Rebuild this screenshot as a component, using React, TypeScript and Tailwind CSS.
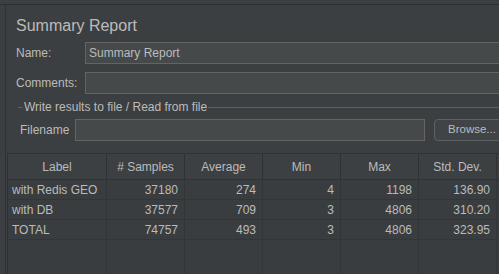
import React from "react";

const rows = [
  ["with Redis GEO", "37180", "274", "4", "1198", "136.90"],
  ["with DB", "37577", "709", "3", "4806", "310.20"],
  ["TOTAL", "74757", "493", "3", "4806", "323.95"],
];
const headers = ["Label", "# Samples", "Average", "Min", "Max", "Std. Dev."];
const widths = ["w-[99px]", "w-[78px]", "w-[78px]", "w-[78px]", "w-[78px]", "w-[78px]"];

export default function App() {
  return (
    <div
      className="w-[499px] h-[274px] overflow-hidden bg-[#3c3f41] text-[#bbbbbb] flex flex-col"
      style={{ fontFamily: '"Liberation Sans", Arial, sans-serif' }}
    >
      <div className="h-[4px] shrink-0 bg-[#3c3f41]" />
      <div className="flex-1 flex border-t border-[#2d2f30] min-h-0">
        <div className="w-[5px] shrink-0" />
        <div className="flex-1 border-l border-[#2f3133] flex flex-col min-w-0 overflow-hidden">
          <div className="pl-[10px] pt-[11px] h-[37px] shrink-0 text-[16px] leading-[20px] text-[#bbbbbb]">
            Summary Report
          </div>
          <div className="flex items-center h-[22px] shrink-0 pl-[10px]">
            <div className="w-[69px] shrink-0 text-[12px]">Name:</div>
            <div className="w-[420px] shrink-0 h-[22px] bg-[#45494a] border border-[#646464] flex items-center pl-[3px] text-[12px]">
              Summary Report
            </div>
          </div>
          <div className="flex items-center h-[22px] shrink-0 mt-[8px] pl-[10px]">
            <div className="w-[69px] shrink-0 text-[12px]">Comments:</div>
            <div className="w-[420px] shrink-0 h-[22px] bg-[#45494a] border border-[#646464]" />
          </div>
          <div className="flex items-center h-[15px] shrink-0 mt-[6px] pl-[12px]">
            <div className="w-[5px] h-px bg-[#5d6062]" />
            <div className="text-[12px] px-[1px] leading-[15px]">Write results to file / Read from file</div>
            <div className="flex-1 h-px bg-[#5d6062]" />
          </div>
          <div className="flex items-center h-[22px] shrink-0 mt-[4px] pl-[14px]">
            <div className="w-[55px] shrink-0 text-[12px]">Filename</div>
            <div className="w-[350px] shrink-0 h-[22px] bg-[#45494a] border border-[#646464]" />
            <div className="ml-[9px] h-[22px] w-[80px] shrink-0 rounded-[4px] border border-[#5e6163] bg-[#414446] text-[11.5px] pl-[13px] flex items-center">
              Browse...
            </div>
          </div>
          <div className="mt-[12px] ml-[1px] flex-1 flex flex-col border-t border-l border-[#2f3133] bg-[#3a3d3f]">
            <div className="flex h-[26px] shrink-0 bg-[#3d4043] border-b border-[#2f3133]">
              {headers.map((h, i) => (
                <div
                  key={h}
                  className={`${widths[i]} shrink-0 border-r border-[#2f3133] flex items-center justify-center text-[12px]`}
                >
                  {h}
                </div>
              ))}
              <div className="flex-1" />
            </div>
            {rows.map((r, ri) => (
              <div key={ri} className="flex h-[20px] shrink-0 border-b border-[#333638]">
                {r.map((c, i) => (
                  <div
                    key={i}
                    className={`${widths[i]} shrink-0 border-r border-[#333638] flex items-center text-[12px] ${
                      i === 0 ? "justify-start pl-[4px]" : "justify-end pr-[6px]"
                    }`}
                  >
                    {c}
                  </div>
                ))}
                <div className="flex-1" />
              </div>
            ))}
            <div className="flex flex-1">
              {widths.map((w, i) => (
                <div key={i} className={`${w} shrink-0 border-r border-[#333638]`} />
              ))}
            </div>
          </div>
        </div>
      </div>
    </div>
  );
}
